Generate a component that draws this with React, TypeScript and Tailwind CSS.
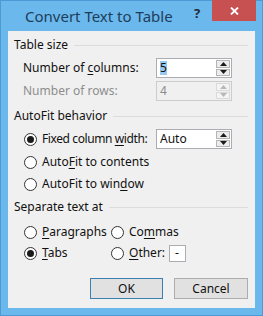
import React from 'react';

const font = { fontFamily: '"Noto Sans", "Open Sans", sans-serif' };

function Spinner({ value, disabled, selected }: { value: string; disabled?: boolean; selected?: boolean }) {
  const arrow = disabled ? '#b8b8b8' : '#1a1a1a';
  return (
    <div
      className={`flex h-[20px] w-[76px] shrink-0 border ${disabled ? 'border-[#cccccc] bg-[#f0f0f0]' : 'border-[#abadb3] bg-white'}`}
    >
      <div className="flex flex-1 items-center pl-[3px]">
        <span
          className={`leading-[14px] ${selected ? 'bg-[#99c9ef] text-[#111]' : ''} ${disabled ? 'text-[#8d8d8d]' : 'text-[#111]'}`}
        >
          {value}
        </span>
      </div>
      <div className="flex w-[16px] flex-col gap-px p-px">
        {['up', 'down'].map((d) => (
          <div
            key={d}
            className={`flex flex-1 items-center justify-center border ${disabled ? 'border-[#dadada] bg-[#f4f4f4]' : 'border-[#b5b5b5] bg-[#ececec]'}`}
          >
            <svg width="7" height="4" viewBox="0 0 7 4">
              {d === 'up' ? <polygon points="3.5,0 7,4 0,4" fill={arrow} /> : <polygon points="0,0 7,0 3.5,4" fill={arrow} />}
            </svg>
          </div>
        ))}
      </div>
    </div>
  );
}

function Radio({ checked }: { checked?: boolean }) {
  return (
    <span className="flex h-[13px] w-[13px] shrink-0 items-center justify-center rounded-full border border-[#333333] bg-white">
      {checked && <span className="h-[7px] w-[7px] rounded-full bg-[#1a1a1a]" />}
    </span>
  );
}

function Header({ label }: { label: string }) {
  return (
    <div className="flex h-[16px] items-center gap-[6px] pl-[6px] pr-[7px]">
      <span className="whitespace-nowrap text-[#111]">{label}</span>
      <span className="h-px flex-1 bg-[#dcdcdc]" />
    </div>
  );
}

function U({ children }: { children: React.ReactNode }) {
  return <span className="underline underline-offset-[2px]">{children}</span>;
}

export default function App() {
  return (
    <div className="h-[316px] w-[263px] border border-[#4b9ad8] bg-[#6bb8ec] text-[12px]" style={font}>
      {/* Title bar */}
      <div className="relative flex h-[30px] items-center">
        <span className="pl-[24px] text-[15px] leading-none text-[#1d3d5a]">Convert Text to Table</span>
        <span className="absolute left-[193px] top-[6px] text-[13px] font-bold leading-none text-[#1d2a36]">?</span>
        <div className="absolute left-[211px] top-[-1px] flex h-[21px] w-[44px] items-center justify-center bg-[#c75050]">
          <svg width="9" height="8" viewBox="0 0 9 8">
            <path d="M1 0.5 L8 7.5 M8 0.5 L1 7.5" stroke="#ffffff" strokeWidth="1.8" />
          </svg>
        </div>
      </div>

      {/* Client area */}
      <div className="ml-[7px] flex h-[277px] w-[247px] flex-col bg-[#f0f0f0] pt-[6px] whitespace-nowrap">
        <Header label="Table size" />
        <div className="mt-[5px] flex h-[20px] items-center pl-[15px] pr-[23px]">
          <span className="flex-1 text-[#111]">
            Number of <U>c</U>olumns:
          </span>
          <Spinner value="5" selected />
        </div>
        <div className="mt-[3px] flex h-[20px] items-center pl-[15px] pr-[23px]">
          <span className="flex-1 text-[#8d8d8d]">Number of rows:</span>
          <Spinner value="4" disabled />
        </div>

        <div className="mt-[7px]">
          <Header label="AutoFit behavior" />
        </div>
        <div className="mt-[5px] flex h-[20px] items-center gap-[5px] pl-[16px] pr-[23px]">
          <Radio checked />
          <span className="flex-1 tracking-[-0.4px] text-[#111]">
            Fixed column <U>w</U>idth:
          </span>
          <div className="flex h-[20px] w-[76px] shrink-0 border border-[#abadb3] bg-white">
            <div className="flex flex-1 items-center pl-[3px] text-[#111]">Auto</div>
            <div className="flex w-[16px] flex-col gap-px p-px">
              <div className="flex flex-1 items-center justify-center border border-[#b5b5b5] bg-[#ececec]">
                <svg width="7" height="4" viewBox="0 0 7 4">
                  <polygon points="3.5,0 7,4 0,4" fill="#1a1a1a" />
                </svg>
              </div>
              <div className="flex flex-1 items-center justify-center border border-[#b5b5b5] bg-[#ececec]">
                <svg width="7" height="4" viewBox="0 0 7 4">
                  <polygon points="0,0 7,0 3.5,4" fill="#1a1a1a" />
                </svg>
              </div>
            </div>
          </div>
        </div>
        <div className="mt-[3px] flex h-[20px] items-center gap-[5px] pl-[16px]">
          <Radio />
          <span className="text-[#111]">
            Auto<U>F</U>it to contents
          </span>
        </div>
        <div className="mt-[2px] flex h-[20px] items-center gap-[5px] pl-[16px]">
          <Radio />
          <span className="text-[#111]">
            AutoFit to win<U>d</U>ow
          </span>
        </div>

        <div className="mt-[5px]">
          <Header label="Separate text at" />
        </div>
        <div className="mt-[7px] grid grid-cols-[87px_1fr] gap-y-px pl-[16px]">
          <div className="flex h-[20px] items-center gap-[5px]">
            <Radio />
            <span className="text-[#111]">
              <U>P</U>aragraphs
            </span>
          </div>
          <div className="flex h-[20px] items-center gap-[5px]">
            <Radio />
            <span className="text-[#111]">
              Co<U>m</U>mas
            </span>
          </div>
          <div className="flex h-[20px] items-center gap-[5px]">
            <Radio checked />
            <span className="text-[#111]">
              <U>T</U>abs
            </span>
          </div>
          <div className="flex h-[20px] items-center">
            <Radio />
            <span className="ml-[5px] w-[40px] text-[#111]">
              <U>O</U>ther:
            </span>
            <div className="flex h-[17px] w-[17px] items-center border border-[#abadb3] bg-white pl-[5px] text-[#111]">
              -
            </div>
          </div>
        </div>

        <div className="mt-[15px] flex justify-end gap-[11px] pr-[7px]">
          <button className="h-[21px] w-[73px] border border-[#3c7fb1] bg-[#e1e1e1] text-[#111]">OK</button>
          <button className="h-[21px] w-[74px] border border-[#adadad] bg-[#e1e1e1] text-[#111]">Cancel</button>
        </div>
      </div>
    </div>
  );
}
